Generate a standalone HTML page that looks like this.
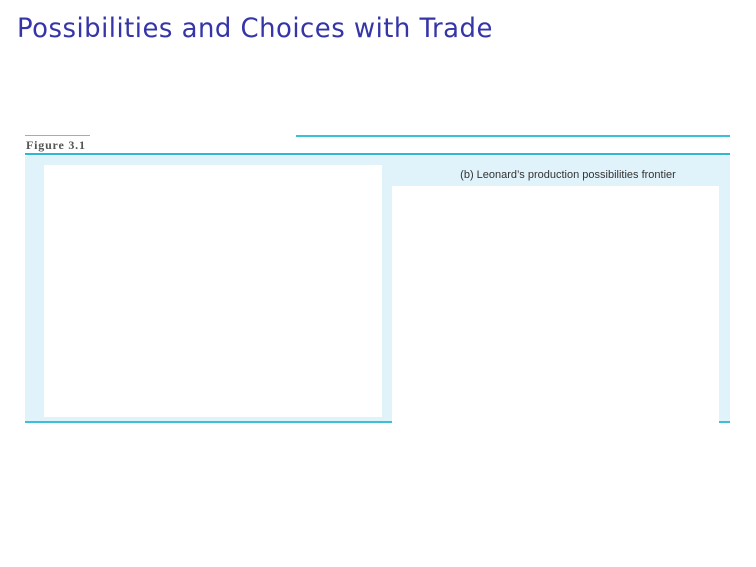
<!DOCTYPE html>
<html><head><meta charset="utf-8"><style>
html,body{margin:0;padding:0;background:#fff;width:756px;height:567px;overflow:hidden;position:relative;font-family:"Liberation Sans",sans-serif}
.a{position:absolute}
h1{position:absolute;left:17px;top:13px;margin:0;font:27px "DejaVu Sans",sans-serif;color:#3535a8;white-space:nowrap;transform-origin:0 0;transform:scaleX(0.96);letter-spacing:0.5px}
</style></head><body>
<h1>Possibilities and Choices with Trade</h1>
<div class="a" style="left:25px;top:135px;width:65px;height:1px;background:#5cc8dc"></div>
<div class="a" style="left:296px;top:135px;width:434px;height:2px;background:#3cc0d8"></div>
<div class="a" style="left:26px;top:138px;font:bold 12px 'Liberation Serif',serif;color:#555;letter-spacing:0.8px">Figure 3.1</div>
<div class="a" style="left:25px;top:153px;width:705px;height:2px;background:#2cb8d4"></div>
<div class="a" style="left:25px;top:156px;width:705px;height:265px;background:#e0f2fa"></div>
<div class="a" style="left:44px;top:165px;width:338px;height:252px;background:#fff"></div>
<div class="a" style="left:392px;top:186px;width:327px;height:240px;background:#fff"></div>
<div class="a" style="left:392px;top:169px;width:352px;text-align:center;font-size:11px;color:#333">(b) Leonard’s production possibilities frontier</div>
<div class="a" style="left:25px;top:421px;width:367px;height:2px;background:#3cc0d8"></div>
<div class="a" style="left:719px;top:421px;width:11px;height:2px;background:#3cc0d8"></div>
</body></html>
